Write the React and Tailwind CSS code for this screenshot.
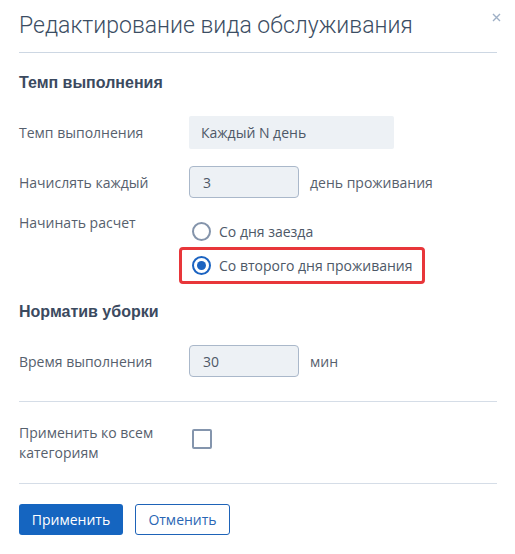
import React from "react";

const LABEL_FONT = "font-['Open_Sans',sans-serif]";

function Row({ label, children, className = "" }) {
  return (
    <div className={`flex items-center ${className}`}>
      <div className="w-[170px] shrink-0 text-[14px] text-[#56606d]">{label}</div>
      {children}
    </div>
  );
}

function Radio({ checked }) {
  return (
    <span
      className={`flex h-[19px] w-[19px] shrink-0 items-center justify-center rounded-full border-2 ${
        checked ? "border-[#1b63c1]" : "border-[#8494ab]"
      }`}
    >
      {checked ? <span className="h-[9px] w-[9px] rounded-full bg-[#1b63c1]" /> : null}
    </span>
  );
}

export default function App() {
  return (
    <div className={`min-h-[554px] w-[515px] bg-white pl-[19px] pr-[18px] ${LABEL_FONT}`}>
      <div className="relative">
        <h1 className="pt-[11px] font-['Roboto',sans-serif] text-[23px] font-light leading-[30px] text-[#3b4d63]">
          Редактирование вида обслуживания
        </h1>
        <svg
          className="absolute right-[-4px] top-[13px]"
          width="9"
          height="9"
          viewBox="0 0 9 9"
          fill="none"
          stroke="#9fb0c6"
          strokeWidth="1.4"
        >
          <path d="M1 1L8 8M8 1L1 8" />
        </svg>
      </div>
      <div className="mt-[11px] h-px bg-[#cdd7e3]" />

      <h2 className="mt-[20px] font-['Liberation_Sans',sans-serif] text-[16px] font-bold leading-[19px] text-[#3b4a5f]">
        Темп выполнения
      </h2>

      <Row label="Темп выполнения" className="mt-[24px]">
        <div className="flex h-[33px] w-[205px] items-center rounded-[2px] bg-[#edf1f5] pl-[12px] text-[14px] text-[#4d5867]">
          Каждый N день
        </div>
      </Row>

      <Row label="Начислять каждый" className="mt-[17px]">
        <div className="flex h-[32px] w-[110px] items-center rounded-[4px] border border-[#aab8ca] bg-[#edf1f5] pl-[13px] text-[14px] text-[#4d5867]">
          3
        </div>
        <span className="ml-[11px] text-[14px] text-[#56606d]">день проживания</span>
      </Row>

      <div className="mt-[15px] flex">
        <div className="w-[170px] shrink-0 text-[14px] leading-[20px] text-[#56606d]">Начинать расчет</div>
        <div className="flex flex-col">
          <div className="mt-[8px] flex items-center gap-[8px] pl-[3px]">
            <Radio />
            <span className="text-[14px] text-[#4d5867]">Со дня заезда</span>
          </div>
          <div className="ml-[-10px] mt-[5px] flex h-[37px] w-[246px] items-center gap-[8px] rounded-[4px] border-[3px] border-[#e8363a] pl-[10px]">
            <Radio checked />
            <span className="text-[14px] text-[#4d5867]">Со второго дня проживания</span>
          </div>
        </div>
      </div>

      <h2 className="mt-[18px] font-['Liberation_Sans',sans-serif] text-[16px] font-bold leading-[19px] text-[#3b4a5f]">
        Норматив уборки
      </h2>

      <Row label="Время выполнения" className="mt-[24px]">
        <div className="flex h-[32px] w-[110px] items-center rounded-[4px] border border-[#aab8ca] bg-[#edf1f5] pl-[13px] text-[14px] text-[#4d5867]">
          30
        </div>
        <span className="ml-[11px] text-[14px] text-[#56606d]">мин</span>
      </Row>

      <div className="mt-[24px] h-px bg-[#d5dde7]" />

      <div className="mt-[21px] flex items-start">
        <div className="w-[170px] shrink-0 text-[14px] leading-[20px] text-[#56606d]">
          Применить ко всем
          <br />
          категориям
        </div>
        <span className="mt-[6px] ml-[3px] h-[20px] w-[20px] rounded-[2px] border-2 border-[#8495ad]" />
      </div>

      <div className="mt-[20px] h-px bg-[#d5dde7]" />

      <div className="mt-[20px] flex gap-[12px]">
        <button
          type="button"
          className="h-[31px] w-[104px] rounded-[3px] bg-[#1565c0] text-[14px] font-medium text-white"
        >
          Применить
        </button>
        <button
          type="button"
          className="h-[31px] w-[95px] rounded-[3px] border border-[#1e63b8] bg-white text-[14px] text-[#2a66b4]"
        >
          Отменить
        </button>
      </div>
    </div>
  );
}
